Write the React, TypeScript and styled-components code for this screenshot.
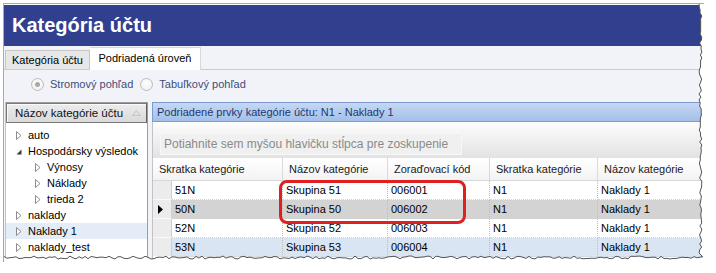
import React from 'react';
import styled, { createGlobalStyle } from 'styled-components';

const Global = createGlobalStyle`
  html, body { margin: 0; padding: 0; background: #fff; }
  body { font-family: "Liberation Sans", Arial, sans-serif; font-size: 11px; color: #000; }
`;

const Page = styled.div`
  width: 716px;
  height: 273px;
  box-sizing: border-box;
  padding: 3px 0 0 3px;
  background: #fff;
`;

const Frame = styled.div`
  position: relative;
  width: 701px;
  height: 259px;
  box-sizing: border-box;
  border-top: 1px solid #a9a9a9;
  border-left: 1px solid #a9a9a9;
  background: #f1f3f8;
  overflow: hidden;
  display: flex;
  flex-direction: column;
`;

const TitleBar = styled.div`
  height: 42px;
  box-sizing: border-box;
  border-top: 1px solid #fff;
  background: #313f8f;
  color: #fff;
  font-weight: bold;
  font-size: 20px;
  padding-left: 8px;
  display: flex;
  align-items: center;
  flex-shrink: 0;
`;

const TabStrip = styled.div`
  height: 24px;
  box-sizing: border-box;
  border-bottom: 1px solid #c9cdd6;
  display: flex;
  align-items: flex-end;
  padding-left: 1px;
  flex-shrink: 0;
`;

const Tab = styled.div<{ $active?: boolean }>`
  box-sizing: border-box;
  display: flex;
  align-items: center;
  justify-content: center;
  font-size: 11px;
  color: #000;
  width: ${(p) => (p.$active ? '111px' : '85px')};
  height: ${(p) => (p.$active ? '23px' : '19px')};
  margin-bottom: ${(p) => (p.$active ? '-1px' : '0')};
  background: ${(p) => (p.$active ? '#fff' : '#e7e7e7')};
  border: 1px solid ${(p) => (p.$active ? '#d4d7dd' : '#c6c6c6')};
  border-bottom: none;
  border-left: ${(p) => (p.$active ? 'none' : '1px solid #c6c6c6')};
  padding-bottom: ${(p) => (p.$active ? '2px' : '0')};
`;

const RadioRow = styled.div`
  height: 28px;
  display: flex;
  align-items: center;
  padding-left: 27px;
  flex-shrink: 0;
  color: #3d4d7a;
  font-size: 11px;
`;

const RadioItem = styled.label`
  display: flex;
  align-items: center;
  gap: 6px;
  margin-right: 7px;
`;

const RadioCircle = styled.span<{ $checked?: boolean }>`
  width: 13px;
  height: 13px;
  box-sizing: border-box;
  border-radius: 50%;
  border: 1px solid #bcbcbc;
  background: radial-gradient(circle at 50% 40%, #ffffff 0%, #f2f2f2 70%, #e3e3e3 100%);
  display: flex;
  align-items: center;
  justify-content: center;
  &::after {
    content: '';
    width: 5px;
    height: 5px;
    border-radius: 50%;
    background: ${(p) => (p.$checked ? '#a9a9a9' : 'transparent')};
  }
`;

const Body = styled.div`
  flex: 1;
  display: flex;
  gap: 4px;
  padding: 4px 0 0 1px;
  min-height: 0;
`;

const LeftPanel = styled.div`
  width: 143px;
  box-sizing: border-box;
  background: #fff;
  border: 1px solid #9d9d9d;
  border-left-color: #c4c4c4;
  display: flex;
  flex-direction: column;
`;

const TreeHeader = styled.div`
  height: 20px;
  flex-shrink: 0;
  box-sizing: border-box;
  border: 1px solid #7a7a7a;
  border-right-color: #5e5e5e;
  background: linear-gradient(#ececec, #dadada);
  box-shadow: inset 1px 1px 0 #fafafa;
  display: flex;
  align-items: center;
  justify-content: space-between;
  padding: 0 5px 0 8px;
  color: #111;
  font-size: 11.5px;
`;

const TreeList = styled.div`
  padding-top: 4px;
  display: flex;
  flex-direction: column;
`;

const TreeItem = styled.div<{ $level: number; $selected?: boolean }>`
  height: 16px;
  flex-shrink: 0;
  display: flex;
  align-items: center;
  padding-left: ${(p) => 10 + p.$level * 19}px;
  background: ${(p) => (p.$selected ? '#e3ecf7' : 'transparent')};
  font-size: 11px;
  white-space: nowrap;
`;

const Expander = styled.span`
  width: 12px;
  display: flex;
  align-items: center;
  flex-shrink: 0;
`;

const RightPanel = styled.div`
  flex: 1;
  display: flex;
  flex-direction: column;
  min-width: 0;
`;

const CaptionBar = styled.div`
  height: 20px;
  flex-shrink: 0;
  box-sizing: border-box;
  border: 1px solid #7c9bd0;
  background: linear-gradient(#c6d8f3, #a3bfe9);
  color: #1d3872;
  font-size: 11px;
  display: flex;
  align-items: center;
  padding-left: 4px;
  white-space: nowrap;
`;

const GroupPanel = styled.div`
  height: 36px;
  flex-shrink: 0;
  box-sizing: border-box;
  border-left: 1px solid #c3c3c3;
  background: linear-gradient(#fdfdfd, #e2e2e2);
  padding: 11px 0 0 7px;
`;

const GroupHint = styled.div`
  width: 302px;
  height: 22px;
  box-sizing: border-box;
  background: #f0f0f0;
  border: 1px solid #f7f7f7;
  color: #8a8a8a;
  font-size: 12px;
  display: flex;
  align-items: center;
  padding-left: 3px;
  white-space: nowrap;
`;

const Grid = styled.div`
  flex: 1;
  background: #fff;
  border-left: 1px solid #c3c3c3;
  display: flex;
  flex-direction: column;
`;

const cols = '19px 111px 105px 102px 108px 1fr';

const HeaderRow = styled.div`
  display: grid;
  grid-template-columns: ${cols};
  height: 23px;
  flex-shrink: 0;
  box-sizing: border-box;
  border-bottom: 1px solid #d8d8d8;
  background: linear-gradient(#ffffff, #f3f3f3);
`;

const HeaderCell = styled.div<{ $span?: number }>`
  grid-column: span ${(p) => p.$span ?? 1};
  display: flex;
  align-items: center;
  padding-left: 6px;
  border-right: 1px solid #dadada;
  font-size: 11px;
  color: #1a1a1a;
  white-space: nowrap;
  overflow: hidden;
`;

type RowKind = 'normal' | 'selected' | 'alt';

const rowBg: Record<RowKind, string> = {
  normal: '#ffffff',
  selected: '#d3d3d3',
  alt: '#dae5f3',
};

const DataRow = styled.div<{ $kind: RowKind }>`
  display: grid;
  grid-template-columns: ${cols};
  height: 19px;
  flex-shrink: 0;
  background: ${(p) => rowBg[p.$kind]};
`;

const RowHeader = styled.div`
  background: #ececec;
  border-right: 1px solid #cfcfcf;
  border-bottom: 1px solid #fafafa;
  display: flex;
  align-items: center;
  padding-left: 5px;
`;

const Cell = styled.div`
  display: flex;
  align-items: center;
  padding-left: 3px;
  border-right: 1px dotted #bdbdbd;
  border-bottom: 1px dotted #d2d2d2;
  font-size: 11px;
  white-space: nowrap;
  overflow: hidden;
`;

const Annotation = styled.div`
  position: absolute;
  left: 275px;
  top: 176px;
  width: 187px;
  height: 44px;
  box-sizing: border-box;
  border: 3px solid #e02020;
  border-radius: 8px;
  pointer-events: none;
`;

const TornBottom = styled.svg`
  position: absolute;
  left: 0;
  bottom: 0;
`;

const TornRight = styled.svg`
  position: absolute;
  right: 0;
  top: 0;
`;

const rnd = (i: number, seed: number) => {
  const v = Math.sin(i * 12.9898 + seed * 78.233) * 43758.5453;
  return v - Math.floor(v);
};

const CollapsedIcon = () => (
  <svg width="6" height="9" viewBox="0 0 6 9">
    <polygon points="0.5,0.5 5,4.5 0.5,8.5" fill="#fff" stroke="#8c8c8c" strokeWidth="1" />
  </svg>
);

const ExpandedIcon = () => (
  <svg width="6" height="9" viewBox="0 0 6 9">
    <polygon points="5.5,2.5 5.5,7.5 0.5,7.5" fill="#3a3a3a" />
  </svg>
);

const SortIcon = () => (
  <svg width="9" height="6" viewBox="0 0 9 6">
    <polygon points="4.5,0.5 8.5,5.5 0.5,5.5" fill="none" stroke="#c4c4c4" strokeWidth="1" />
  </svg>
);

const RowPointer = () => (
  <svg width="5" height="9" viewBox="0 0 5 9">
    <polygon points="0,0 5,4.5 0,9" fill="#000" />
  </svg>
);

const tree: { label: string; level: number; expanded?: boolean; selected?: boolean }[] = [
  { label: 'auto', level: 0 },
  { label: 'Hospodársky výsledok', level: 0, expanded: true },
  { label: 'Výnosy', level: 1 },
  { label: 'Náklady', level: 1 },
  { label: 'trieda 2', level: 1 },
  { label: 'naklady', level: 0 },
  { label: 'Naklady 1', level: 0, selected: true },
  { label: 'naklady_test', level: 0 },
  { label: 'Skupiny', level: 0 },
];

const rows: { code: string; name: string; order: string; kind: RowKind; current?: boolean }[] = [
  { code: '51N', name: 'Skupina 51', order: '006001', kind: 'normal' },
  { code: '50N', name: 'Skupina 50', order: '006002', kind: 'selected', current: true },
  { code: '52N', name: 'Skupina 52', order: '006003', kind: 'normal' },
  { code: '53N', name: 'Skupina 53', order: '006004', kind: 'alt' },
];

const W = 701;
const H = 258;

const bottomPts = () => {
  const pts: [number, number][] = [];
  for (let x = 0, i = 0; x <= W; x += 3, i++) pts.push([x, 3 + rnd(i, 1) * 3]);
  return pts;
};
const rightPts = () => {
  const pts: [number, number][] = [];
  for (let y = 0, i = 0; y <= H; y += 3, i++) pts.push([2 + rnd(i, 2) * 3, y]);
  return pts;
};

export default function App() {
  const bp = bottomPts();
  const rp = rightPts();
  const bLine = bp.map(([x, y]) => `${x},${y.toFixed(1)}`).join(' ');
  const rLine = rp.map(([x, y]) => `${x.toFixed(1)},${y}`).join(' ');
  return (
    <Page>
      <Global />
      <Frame>
        <TitleBar>Kategória účtu</TitleBar>
        <TabStrip>
          <Tab>Kategória účtu</Tab>
          <Tab $active>Podriadená úroveň</Tab>
        </TabStrip>
        <RadioRow>
          <RadioItem>
            <RadioCircle $checked />
            Stromový pohľad
          </RadioItem>
          <RadioItem>
            <RadioCircle />
            Tabuľkový pohľad
          </RadioItem>
        </RadioRow>
        <Body>
          <LeftPanel>
            <TreeHeader>
              <span>Názov kategórie účtu</span>
              <SortIcon />
            </TreeHeader>
            <TreeList>
              {tree.map((t) => (
                <TreeItem key={t.label} $level={t.level} $selected={t.selected}>
                  <Expander>{t.expanded ? <ExpandedIcon /> : <CollapsedIcon />}</Expander>
                  {t.label}
                </TreeItem>
              ))}
            </TreeList>
          </LeftPanel>
          <RightPanel>
            <CaptionBar>Podriadené prvky kategórie účtu: N1 - Naklady 1</CaptionBar>
            <GroupPanel>
              <GroupHint>Potiahnite sem myšou hlavičku stĺpca pre zoskupenie</GroupHint>
            </GroupPanel>
            <Grid>
              <HeaderRow>
                <HeaderCell $span={2}>Skratka kategórie</HeaderCell>
                <HeaderCell>Názov kategórie</HeaderCell>
                <HeaderCell>Zoraďovací kód</HeaderCell>
                <HeaderCell>Skratka kategórie</HeaderCell>
                <HeaderCell>Názov kategórie</HeaderCell>
              </HeaderRow>
              {rows.map((r) => (
                <DataRow key={r.code} $kind={r.kind}>
                  <RowHeader>{r.current && <RowPointer />}</RowHeader>
                  <Cell>{r.code}</Cell>
                  <Cell>{r.name}</Cell>
                  <Cell>{r.order}</Cell>
                  <Cell>N1</Cell>
                  <Cell>Naklady 1</Cell>
                </DataRow>
              ))}
            </Grid>
          </RightPanel>
        </Body>
        <Annotation />
        <TornRight width="7" height={H} viewBox={`0 0 7 ${H}`}>
          <polygon points={`7,0 ${rLine} 7,${H}`} fill="#fff" />
          <polyline points={rLine} fill="none" stroke="#555" strokeWidth="1" />
        </TornRight>
        <TornBottom width={W} height="9" viewBox={`0 0 ${W} 9`}>
          <polygon points={`0,9 ${bLine} ${W},9`} fill="#fff" />
          <polyline points={bLine} fill="none" stroke="#555" strokeWidth="1" />
        </TornBottom>
      </Frame>
    </Page>
  );
}
